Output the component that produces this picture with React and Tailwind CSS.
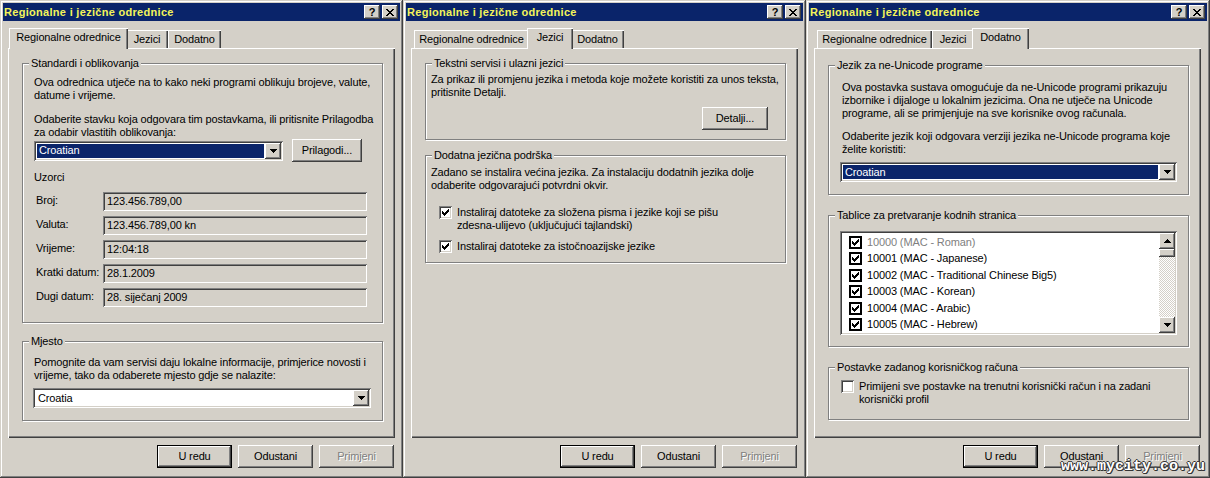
import React from 'react'

// classic 3D edges
const raised =
  'shadow-[inset_-1px_-1px_#404040,inset_1px_1px_#ffffff,inset_-2px_-2px_#808080,inset_2px_2px_#d4d0c8]'
const sunken =
  'shadow-[inset_1px_1px_#808080,inset_-1px_-1px_#ffffff,inset_2px_2px_#404040,inset_-2px_-2px_#d4d0c8]'
const frame =
  'shadow-[inset_-1px_-1px_#404040,inset_1px_1px_#d4d0c8,inset_-2px_-2px_#808080,inset_2px_2px_#ffffff]'

const CheckMark = () => (
  <svg width="7" height="7" viewBox="0 0 7 7" shapeRendering="crispEdges">
    {[2, 3, 4, 3, 2, 1, 0].map((y, x) => (
      <rect key={x} x={x} y={y} width="1" height="3" fill="#000" />
    ))}
  </svg>
)

const ArrowDown = () => (
  <svg width="7" height="4" viewBox="0 0 7 4" shapeRendering="crispEdges">
    <path d="M0 0h7v1h-1v1h-1v1h-1v1h-1v-1h-1v-1h-1v-1h-1z" fill="#000" />
  </svg>
)

const ArrowUp = () => (
  <svg width="7" height="4" viewBox="0 0 7 4" shapeRendering="crispEdges">
    <path d="M3 0h1v1h1v1h1v1h1v1h-7v-1h1v-1h1v-1h1z" fill="#000" />
  </svg>
)

const CloseGlyph = () => {
  const rows = [
    [[0, 2], [6, 2]],
    [[1, 2], [5, 2]],
    [[2, 4]],
    [[3, 2]],
    [[2, 4]],
    [[1, 2], [5, 2]],
    [[0, 2], [6, 2]],
  ]
  return (
    <svg width="8" height="7" viewBox="0 0 8 7" shapeRendering="crispEdges">
      {rows.map((segs, y) =>
        segs.map(([x, w]) => <rect key={`${y}-${x}`} x={x} y={y} width={w} height="1" fill="#000" />)
      )}
    </svg>
  )
}

function CapButton({ children, className = '' }) {
  return (
    <div className={`flex h-[14px] w-[16px] items-center justify-center bg-[#d4d0c8] ${raised} ${className}`}>
      {children}
    </div>
  )
}

function TitleBar() {
  return (
    <div className="flex h-[18px] items-center bg-[#0a246a] pl-[1px] pr-[2px]">
      <span className="flex-1 text-[11px] font-bold tracking-[0.3px] text-[#f4f45a]">
        Regionalne i jezične odrednice
      </span>
      <CapButton className="mr-[2px]">
        <span className="text-[11px] font-bold leading-none">?</span>
      </CapButton>
      <CapButton>
        <CloseGlyph />
      </CapButton>
    </div>
  )
}

const TABS = [
  { label: 'Regionalne odrednice', w: 'w-[115px]', wa: 'w-[119px]' },
  { label: 'Jezici', w: 'w-[42px]', wa: 'w-[46px]' },
  { label: 'Dodatno', w: 'w-[53px]', wa: 'w-[57px]' },
]

function Tabs({ active }) {
  return (
    <div className="flex h-[20px] items-end pl-[3px]">
      {TABS.map((t, i) =>
        i === active ? (
          <div
            key={t.label}
            className={`relative z-10 -mx-[2px] -mb-[1px] flex h-[21px] items-start justify-center bg-[#d4d0c8] pt-[3px] ${t.wa} shadow-[inset_1px_1px_#ffffff,inset_-1px_0_#404040,inset_-2px_0_#808080]`}
          >
            {t.label}
          </div>
        ) : (
          <div
            key={t.label}
            className={`flex h-[18px] items-start justify-center pt-[3px] ${t.w} shadow-[inset_1px_1px_#ffffff,inset_-1px_0_#404040,inset_-2px_0_#808080]`}
          >
            {t.label}
          </div>
        )
      )}
    </div>
  )
}

function Group({ label, className = '', children }) {
  return (
    <div className={`flex flex-col border border-[#808080] shadow-[inset_1px_1px_#ffffff,1px_1px_#ffffff] ${className}`}>
      <div className="-mt-[7px] ml-[6px] w-fit bg-[#d4d0c8] px-[2px] leading-[13px]">{label}</div>
      {children}
    </div>
  )
}

function Btn({ children, def = false, disabled = false, className = 'w-[75px]' }) {
  const face = (
    <div className={`flex h-full w-full items-center justify-center ${raised}`}>
      <span className={disabled ? 'text-[#808080] [text-shadow:1px_1px_0_#ffffff]' : ''}>{children}</span>
    </div>
  )
  return <div className={`h-[23px] bg-[#d4d0c8] ${def ? 'border border-black' : ''} ${className}`}>{face}</div>
}

function Combo({ value, selected = false, className = '' }) {
  return (
    <div className={`flex h-[20px] bg-white p-[2px] ${sunken} ${className}`}>
      <div className="flex-1 p-[1px]">
        <div
          className={`flex h-full items-center pl-[2px] ${selected ? 'bg-[#0a246a] text-white' : ''}`}
        >
          {value}
        </div>
      </div>
      <div className={`flex w-[16px] items-center justify-center bg-[#d4d0c8] ${raised}`}>
        <ArrowDown />
      </div>
    </div>
  )
}

function Field({ children }) {
  return (
    <div className={`flex h-[19px] w-[264px] items-center bg-[#d4d0c8] pl-[4px] ${sunken}`}>{children}</div>
  )
}

function CheckBox({ checked = false }) {
  return (
    <div className={`flex h-[13px] w-[13px] shrink-0 items-center justify-center bg-white ${sunken}`}>
      {checked && <CheckMark />}
    </div>
  )
}

function FlatCheck() {
  return (
    <div className="flex h-[13px] w-[13px] shrink-0 items-center justify-center border-2 border-black bg-white">
      <CheckMark />
    </div>
  )
}

function Panel({ active, children }) {
  return (
    <div className="ml-[5px] w-[387px]">
      <Tabs active={active} />
      <div
        className={`flex h-[390px] flex-col pl-[14px] pr-[12px] shadow-[inset_1px_1px_#ffffff,inset_-1px_-1px_#404040,inset_-2px_-2px_#808080]`}
      >
        {children}
      </div>
    </div>
  )
}

function Dialog({ active, className = '', children, extra = null }) {
  return (
    <div className={`relative flex h-[478px] shrink-0 flex-col bg-[#d4d0c8] p-[3px] ${frame} ${className}`}>
      <TitleBar />
      <div className="mt-[7px]">
        <Panel active={active}>{children}</Panel>
      </div>
      <div className="ml-[5px] mr-[1px] mt-[7px] flex w-[386px] justify-end gap-[6px]">
        <Btn def>U redu</Btn>
        <Btn>Odustani</Btn>
        <Btn disabled>Primjeni</Btn>
      </div>
      {extra}
    </div>
  )
}

const samples = [
  ['Broj:', '123.456.789,00'],
  ['Valuta:', '123.456.789,00 kn'],
  ['Vrijeme:', '12:04:18'],
  ['Kratki datum:', '28.1.2009'],
  ['Dugi datum:', '28. siječanj 2009'],
]

const codepages = [
  '10000 (MAC - Roman)',
  '10001 (MAC - Japanese)',
  '10002 (MAC - Traditional Chinese Big5)',
  '10003 (MAC - Korean)',
  '10004 (MAC - Arabic)',
  '10005 (MAC - Hebrew)',
]

function RegionalTab() {
  return (
    <>
      <Group label="Standardi i oblikovanja" className="mt-[15px] h-[260px]">
        <div className="flex flex-col pl-[11px]">
          <p className="mt-[6px] whitespace-nowrap">
            Ova odrednica utječe na to kako neki programi oblikuju brojeve, valute,
            <br />
            datume i vrijeme.
          </p>
          <p className="mt-[11px] whitespace-nowrap">
            Odaberite stavku koja odgovara tim postavkama, ili pritisnite Prilagodba
            <br />
            za odabir vlastitih oblikovanja:
          </p>
          <div className="flex items-center">
            <Combo value="Croatian" selected className="w-[249px]" />
            <Btn className="ml-[9px] w-[70px]">Prilagodi...</Btn>
          </div>
          <p className="mt-[9px]">Uzorci</p>
          <div className="mt-[8px] flex flex-col gap-[5px]">
            {samples.map(([k, v]) => (
              <div key={k} className="flex h-[19px] items-center">
                <span className="w-[69px] pb-[2px] pl-[2px]">{k}</span>
                <Field>{v}</Field>
              </div>
            ))}
          </div>
        </div>
      </Group>
      <Group label="Mjesto" className="mt-[18px] h-[80px]">
        <div className="flex flex-col pl-[11px] pr-[10px]">
          <p className="mt-[8px] whitespace-nowrap">
            Pomognite da vam servisi daju lokalne informacije, primjerice novosti i
            <br />
            vrijeme, tako da odaberete mjesto gdje se nalazite:
          </p>
          <Combo value="Croatia" className="mt-[6px] -ml-[1px] w-[338px]" />
        </div>
      </Group>
    </>
  )
}

function LanguagesTab() {
  return (
    <>
      <Group label="Tekstni servisi i ulazni jezici" className="mt-[15px] h-[77px]">
        <div className="flex flex-col pl-[5px]">
          <p className="mt-[3px] whitespace-nowrap">
            Za prikaz ili promjenu jezika i metoda koje možete koristiti za unos teksta,
            <br />
            pritisnite Detalji.
          </p>
          <div className="mt-[8px] flex justify-end pr-[17px]">
            <Btn className="w-[66px]">Detalji...</Btn>
          </div>
        </div>
      </Group>
      <Group label="Dodatna jezična podrška" className="mt-[15px] h-[108px]">
        <div className="flex flex-col pl-[5px]">
          <p className="mt-[4px] whitespace-nowrap">
            Zadano se instalira većina jezika. Za instalaciju dodatnih jezika dolje
            <br />
            odaberite odgovarajući potvrdni okvir.
          </p>
          <div className="ml-[8px] mt-[14px] flex items-start gap-[5px]">
            <CheckBox checked />
            <p className="whitespace-nowrap">
              Instaliraj datoteke za složena pisma i jezike koji se pišu
              <br />
              zdesna-ulijevo (uključujući tajlandski)
            </p>
          </div>
          <div className="ml-[8px] mt-[8px] flex items-start gap-[5px]">
            <CheckBox checked />
            <p className="whitespace-nowrap">Instaliraj datoteke za istočnoazijske jezike</p>
          </div>
        </div>
      </Group>
    </>
  )
}

function ScrollBar() {
  return (
    <div className="flex w-[16px] flex-col">
      <div className={`flex h-[16px] items-center justify-center bg-[#d4d0c8] ${raised}`}>
        <ArrowUp />
      </div>
      <div className={`h-[8px] bg-[#d4d0c8] ${raised}`} />
      <div className="flex-1 bg-[repeating-conic-gradient(#ffffff_0%_25%,#d4d0c8_0%_50%)] bg-size-[2px_2px]" />
      <div className={`flex h-[16px] items-center justify-center bg-[#d4d0c8] ${raised}`}>
        <ArrowDown />
      </div>
    </div>
  )
}

function AdvancedTab() {
  return (
    <>
      <Group label="Jezik za ne-Unicode programe" className="mt-[17px] h-[130px]">
        <div className="flex flex-col pl-[13px]">
          <p className="mt-[9px] whitespace-nowrap">
            Ova postavka sustava omogućuje da ne-Unicode programi prikazuju
            <br />
            izbornike i dijaloge u lokalnim jezicima. Ona ne utječe na Unicode
            <br />
            programe, ali se primjenjuje na sve korisnike ovog računala.
          </p>
          <p className="mt-[10px] whitespace-nowrap">
            Odaberite jezik koji odgovara verziji jezika ne-Unicode programa koje
            <br />
            želite koristiti:
          </p>
          <Combo value="Croatian" selected className="-ml-[2px] mt-[6px] w-[337px]" />
        </div>
      </Group>
      <Group label="Tablice za pretvaranje kodnih stranica" className="mt-[20px] h-[132px]">
        <div className={`ml-[11px] mt-[9px] flex h-[104px] w-[337px] bg-white p-[2px] ${sunken}`}>
          <div className="flex flex-1 flex-col pt-[1px]">
            {codepages.map((c, i) => (
              <div key={c} className="flex h-[17px] items-center gap-[5px] pl-[7px]">
                <FlatCheck />
                <span className={i === 0 ? 'text-[#808080]' : ''}>{c}</span>
              </div>
            ))}
          </div>
          <ScrollBar />
        </div>
      </Group>
      <Group label="Postavke zadanog korisničkog računa" className="mt-[20px] h-[53px]">
        <div className="ml-[12px] mt-[6px] flex items-start gap-[5px]">
          <CheckBox />
          <p className="whitespace-nowrap">
            Primijeni sve postavke na trenutni korisnički račun i na zadani
            <br />
            korisnički profil
          </p>
        </div>
      </Group>
    </>
  )
}

export default function App() {
  return (
    <div className="flex h-[478px] w-[1210px] overflow-hidden bg-[#d4d0c8] font-['Liberation_Sans',Arial,sans-serif] text-[11px] leading-[13px] tracking-[-0.13px] text-black">
      <Dialog active={0} className="w-[403px]">
        <RegionalTab />
      </Dialog>
      <Dialog active={1} className="w-[403px]">
        <LanguagesTab />
      </Dialog>
      <Dialog
        active={2}
        className="w-[404px]"
        extra={
          <span className="absolute bottom-[4px] right-[5px] font-['Liberation_Mono',monospace] text-[15px] font-bold leading-none tracking-normal text-white [text-shadow:1px_0_0_#333,-1px_0_0_#333,0_1px_0_#333,0_-1px_0_#333,1px_1px_0_#333]">
            www.mycity.co.yu
          </span>
        }
      >
        <AdvancedTab />
      </Dialog>
    </div>
  )
}
